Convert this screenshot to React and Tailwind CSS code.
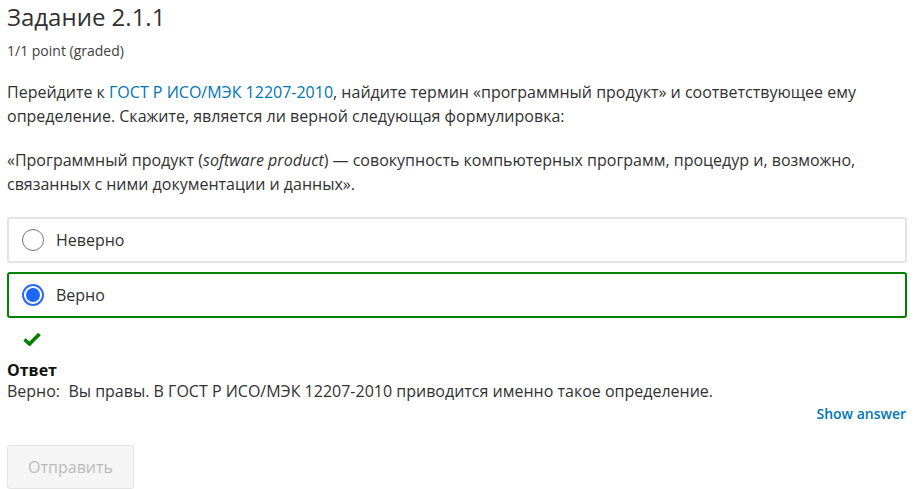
import React from "react";

const Radio = ({ checked }) =>
  checked ? (
    <span className="flex h-[22px] w-[22px] items-center justify-center rounded-full border-2 border-[#2a6af7] bg-white">
      <span className="h-[14px] w-[14px] rounded-full bg-[#1b66f5]" />
    </span>
  ) : (
    <span className="h-[22px] w-[22px] rounded-full border border-[#767676] bg-white" />
  );

const Option = ({ label, checked }) => (
  <label
    className={
      "flex h-[46px] items-center gap-[12px] rounded-[3px] px-[13px] " +
      (checked ? "border-2 border-[#008100]" : "border-2 border-[#e4e4e4]")
    }
  >
    <Radio checked={checked} />
    <span className="text-[16px] text-[#313131]">{label}</span>
  </label>
);

export default function App() {
  return (
    <div
      className="h-[489px] w-[920px] overflow-hidden bg-white pl-[7px] pr-[13px] text-[#313131]"
      style={{ fontFamily: '"Open Sans", sans-serif' }}
    >
      <h2 className="pt-[1px] text-[24px] leading-[32px] text-[#313131]">Задание 2.1.1</h2>
      <div className="mt-[9px] text-[14px] leading-[18px] text-[#414141]">1/1 point (graded)</div>

      <p className="mt-[20px] text-[16px] leading-[24px]">
        Перейдите к <span className="text-[#0075b4]">ГОСТ Р ИСО/МЭК 12207-2010</span>, найдите термин «программный
        продукт» и соответствующее ему определение. Скажите, является ли верной следующая формулировка:
      </p>
      <p className="mt-[20px] text-[16px] leading-[24px]">
        «Программный продукт (<em>software product</em>) — совокупность компьютерных программ, процедур и, возможно,
        связанных с ними документации и данных».
      </p>

      <div className="mt-[21px] flex flex-col gap-[9px]">
        <Option label="Неверно" />
        <Option label="Верно" checked />
      </div>

      <div className="ml-[16px] mt-[14px] h-[16px]">
        <svg width="18" height="14" viewBox="0 0 18 14">
          <path d="M1.5 7.5 L6.5 12 L16.5 2" fill="none" stroke="#008100" strokeWidth="3.6" strokeLinejoin="miter" />
        </svg>
      </div>

      <div className="mt-[12px] text-[16px] font-bold leading-[21px] text-[#111]">Ответ</div>
      <div className="text-[16px] leading-[21px]">
        Верно:&nbsp; Вы правы. В ГОСТ Р ИСО/МЭК 12207-2010 приводится именно такое определение.
      </div>

      <div className="mt-[1px] flex justify-end">
        <button className="mr-[1px] text-[14px] font-semibold leading-[22px] text-[#0075b4]">Show answer</button>
      </div>

      <button
        disabled
        className="mt-[20px] h-[44px] w-[127px] rounded-[3px] border border-[#e4e4e4] bg-[#f5f5f5] text-[16px] text-[#bbbbbb]"
      >
        Отправить
      </button>
    </div>
  );
}
